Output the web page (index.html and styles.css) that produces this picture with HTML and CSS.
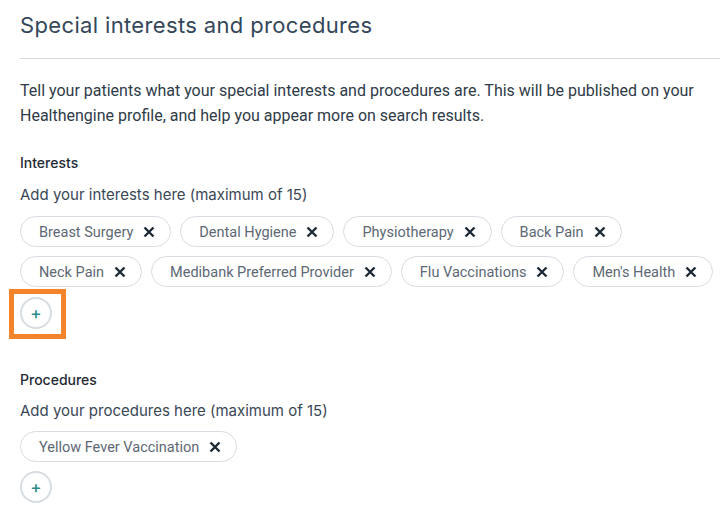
FILE: index.html
```html
<!DOCTYPE html>
<html lang="en">
<head>
    <meta charset="UTF-8">
    <meta name="viewport" content="width=device-width, initial-scale=1.0">
    <title>Special interests and procedures</title>
    <link rel="stylesheet" href="styles.css">
</head>
<body>
    <h1 class="title">Special interests and procedures</h1>

    <p class="intro">Tell your patients what your special interests and procedures are. This will be published on your Healthengine profile, and help you appear more on search results.</p>

    <!-- Interests -->
    <div class="group">
        <h2 class="group-title">Interests</h2>
        <p class="hint">Add your interests here (maximum of 15)</p>
        <div class="chips">
            <span class="chip">Breast Surgery <svg class="remove" viewBox="0 0 12 12"><path d="M1.5 1.5 10.5 10.5M10.5 1.5 1.5 10.5"/></svg></span>
            <span class="chip">Dental Hygiene <svg class="remove" viewBox="0 0 12 12"><path d="M1.5 1.5 10.5 10.5M10.5 1.5 1.5 10.5"/></svg></span>
            <span class="chip">Physiotherapy <svg class="remove" viewBox="0 0 12 12"><path d="M1.5 1.5 10.5 10.5M10.5 1.5 1.5 10.5"/></svg></span>
            <span class="chip">Back Pain <svg class="remove" viewBox="0 0 12 12"><path d="M1.5 1.5 10.5 10.5M10.5 1.5 1.5 10.5"/></svg></span>
            <span class="chip">Neck Pain <svg class="remove" viewBox="0 0 12 12"><path d="M1.5 1.5 10.5 10.5M10.5 1.5 1.5 10.5"/></svg></span>
            <span class="chip">Medibank Preferred Provider <svg class="remove" viewBox="0 0 12 12"><path d="M1.5 1.5 10.5 10.5M10.5 1.5 1.5 10.5"/></svg></span>
            <span class="chip">Flu Vaccinations <svg class="remove" viewBox="0 0 12 12"><path d="M1.5 1.5 10.5 10.5M10.5 1.5 1.5 10.5"/></svg></span>
            <span class="chip">Men's Health <svg class="remove" viewBox="0 0 12 12"><path d="M1.5 1.5 10.5 10.5M10.5 1.5 1.5 10.5"/></svg></span>
        </div>
        <div class="highlight">
            <button class="add">+</button>
        </div>
    </div>

    <!-- Procedures -->
    <div class="group procedures">
        <h2 class="group-title">Procedures</h2>
        <p class="hint">Add your procedures here (maximum of 15)</p>
        <div class="chips">
            <span class="chip">Yellow Fever Vaccination <svg class="remove" viewBox="0 0 12 12"><path d="M1.5 1.5 10.5 10.5M10.5 1.5 1.5 10.5"/></svg></span>
        </div>
        <button class="add">+</button>
    </div>
</body>
</html>
```

FILE: styles.css
```css
body {
    font-family: Roboto, "Liberation Sans", sans-serif;
    background-color: #ffffff;
    color: #2f3b48;
    margin: 0;
    padding: 0 0 0 20px;
}

.title {
    font-family: Inter, "Noto Sans", sans-serif;
    font-weight: 400;
    font-size: 22px;
    line-height: 28px;
    color: #34475a;
    margin: 0;
    padding: 11px 0 19px 0;
    border-bottom: 1px solid #d8d8d8;
    letter-spacing: 0.35px;
}

.intro {
    font-size: 16px;
    line-height: 25px;
    margin: 19px 0 0 0;
    color: #2f3b48;
    letter-spacing: 0;
}

.group {
    margin-top: 25px;
}

.group-title {
    font-family: Inter, "Noto Sans", sans-serif;
    font-size: 14px;
    font-weight: 500;
    color: #1f2a35;
    margin: 0;
    line-height: 20px;
}

.hint {
    font-family: Inter, "Noto Sans", sans-serif;
    font-size: 15px;
    color: #3a4756;
    margin: 12px 0 0 0;
    line-height: 20px;
}

.chips {
    display: flex;
    flex-wrap: wrap;
    gap: 9px;
    margin-top: 11px;
}

.chip {
    display: inline-flex;
    align-items: center;
    box-sizing: border-box;
    height: 31px;
    padding: 1px 15px 0 18px;
    border: 1px solid #d7dde2;
    border-radius: 16px;
    font-size: 14.5px;
    color: #5d6874;
}

.remove {
    width: 12px;
    height: 12px;
    margin-left: 10px;
    fill: none;
    stroke: #1d2a36;
    stroke-width: 2.4;
}

.add {
    display: block;
    box-sizing: border-box;
    width: 32px;
    height: 32px;
    border-radius: 50%;
    border: 2px solid #d6dce1;
    background-color: #ffffff;
    color: #2a8c8c;
    font-family: Inter, sans-serif;
    font-size: 17px;
    font-weight: 500;
    padding: 0;
    line-height: 26px;
    margin-top: 9px;
    cursor: pointer;
}

.highlight {
    width: 32px;
    margin: 2px 0 0 -11px;
    padding: 3px 9px 5px 6px;
    border: 5px solid #f5832a;
}

.highlight .add {
    margin-top: 0;
}

.procedures {
    margin-top: 31px;
}

.procedures .hint {
    margin-top: 11px;
}

.procedures .chips {
    margin-top: 10px;
}
```
